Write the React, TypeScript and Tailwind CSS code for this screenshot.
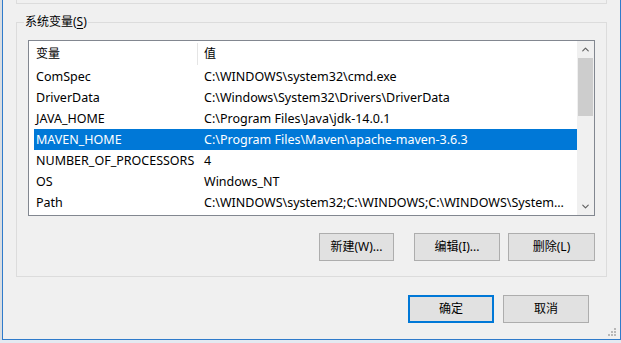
import { ChevronUp, ChevronDown } from "lucide-react";

const FONT = {
  fontFamily: '"Noto Sans", "Noto Sans CJK SC", sans-serif',
};

const ROWS = [
  ["ComSpec", "C:\\WINDOWS\\system32\\cmd.exe"],
  ["DriverData", "C:\\Windows\\System32\\Drivers\\DriverData"],
  ["JAVA_HOME", "C:\\Program Files\\Java\\jdk-14.0.1"],
  ["MAVEN_HOME", "C:\\Program Files\\Maven\\apache-maven-3.6.3"],
  ["NUMBER_OF_PROCESSORS", "4"],
  ["OS", "Windows_NT"],
  ["Path", "C:\\WINDOWS\\system32;C:\\WINDOWS;C:\\WINDOWS\\System..."],
];

const SELECTED = "MAVEN_HOME";

function Btn({ label, w, primary }: { label: string; w: string; primary?: boolean }) {
  return (
    <button
      className={`${w} flex h-[28px] items-center justify-center bg-[#e1e1e1] text-[12px] text-black ${
        primary ? "border-2 border-[#0078d7]" : "border border-[#adadad]"
      }`}
    >
      {label}
    </button>
  );
}

export default function App() {
  return (
    <div className="flex h-[343px] w-[621px] overflow-hidden bg-[#e4eaf1]" style={FONT}>
      <div className="h-[340px] w-[2px] bg-[#d9dde2]" />
      <div className="flex h-[340px] w-[619px] flex-col border-x border-b border-[#2f7bcb] bg-[#f0f0f0]">
        {/* bottom of the user variables group */}
        <div className="ml-[13px] h-[4px] w-[591px] border-x border-b border-[#dcdcdc]" />

        {/* system variables group */}
        <div className="relative mt-[18px] ml-[13px] flex w-[591px] flex-col border border-[#dcdcdc] pt-[17px] pb-[15px] pl-[11px]">
          <span className="absolute -top-[9px] left-[7px] bg-[#f0f0f0] px-[1px] text-[12px] leading-[16px] text-black">
            系统变量(<span className="underline underline-offset-2">S</span>)
          </span>

          <div className="flex h-[176px] w-[567px] border border-[#828790] bg-white">
            <div className="flex w-[548px] flex-col">
              <div className="flex h-[25px] pt-[1px] text-[12px] text-black">
                <div className="flex w-[168px] items-center pl-[7px]">变量</div>
                <div className="my-[1px] w-px bg-[#e5e5e5]" />
                <div className="flex items-center pl-[6px]">值</div>
              </div>
              {ROWS.map(([name, value]) => (
                <div
                  key={name}
                  className={`ml-[5px] flex h-[21px] items-center pt-[2px] text-[12.5px] whitespace-nowrap ${
                    name === SELECTED ? "bg-[#0078d7] text-white" : "text-black"
                  }`}
                >
                  <div className="w-[170px] pl-[2px]">{name}</div>
                  <div>{value}</div>
                </div>
              ))}
            </div>

            <div className="flex w-[17px] flex-col bg-[#f0f0f0]">
              <div className="flex h-[17px] items-center justify-center text-[#606060]">
                <ChevronUp size={11} strokeWidth={2.5} />
              </div>
              <div className="mx-[1px] h-[58px] bg-[#cdcdcd]" />
              <div className="flex-1" />
              <div className="flex h-[17px] items-center justify-center text-[#606060]">
                <ChevronDown size={11} strokeWidth={2.5} />
              </div>
            </div>
          </div>

          <div className="mt-[17px] flex w-[567px] justify-end">
            <Btn label="新建(W)..." w="w-[75px]" />
            <div className="w-[20px]" />
            <Btn label="编辑(I)..." w="w-[86px]" />
            <div className="w-[8px]" />
            <Btn label="删除(L)" w="w-[87px]" />
          </div>
        </div>

        <div className="mt-[18px] mr-[31px] flex justify-end gap-[9px]">
          <Btn label="确定" w="w-[86px]" primary />
          <Btn label="取消" w="w-[86px]" />
        </div>

        <div className="mt-auto mr-[4px] mb-[3px] flex justify-end">
          <svg width="8" height="8" viewBox="0 0 8 8" fill="#b8b8b8">
            <rect x="6" y="0" width="2" height="2" />
            <rect x="3" y="3" width="2" height="2" />
            <rect x="6" y="3" width="2" height="2" />
            <rect x="0" y="6" width="2" height="2" />
            <rect x="3" y="6" width="2" height="2" />
            <rect x="6" y="6" width="2" height="2" />
          </svg>
        </div>
      </div>
    </div>
  );
}
